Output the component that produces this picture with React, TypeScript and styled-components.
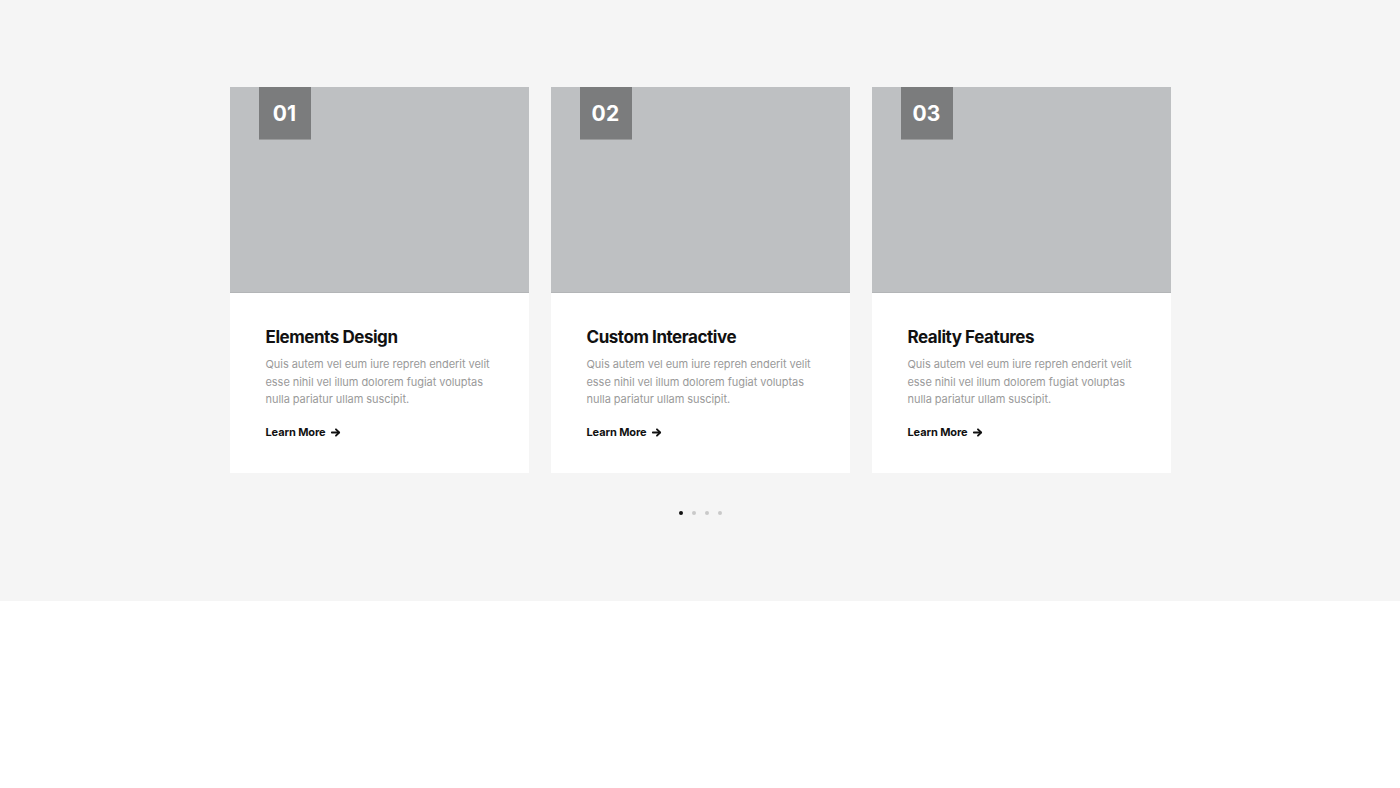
import React from "react";
import styled, { createGlobalStyle } from "styled-components";

const Global = createGlobalStyle`
  html, body { margin: 0; padding: 0; background: #ffffff; }
  body { font-family: Inter, "Noto Sans", sans-serif; }
  * { box-sizing: border-box; }
`;

const Section = styled.section`
  background: #f5f5f5;
  height: 601px;
  padding-top: 87px;
  display: flex;
  flex-direction: column;
  align-items: center;
`;

const Row = styled.div`
  display: grid;
  grid-template-columns: repeat(3, 299px);
  gap: 22px;
`;

const Card = styled.article`
  background: #ffffff;
  height: 386px;
  display: flex;
  flex-direction: column;
`;

const Media = styled.div`
  position: relative;
  height: 206px;
  background: #bec0c2;
  border-bottom: 1px solid #b3b5b7;
`;

const Badge = styled.div`
  position: absolute;
  left: 29px;
  top: 0;
  width: 52px;
  height: 53px;
  background: #7b7c7d;
  border-bottom: 1px solid #9a9b9c;
  color: #ffffff;
  font-weight: 700;
  font-size: 21px;
  display: flex;
  align-items: center;
  justify-content: center;
  letter-spacing: 0.2px;
`;

const Body = styled.div`
  padding: 32px 36px 0 36px;
  display: flex;
  flex-direction: column;
`;

const Title = styled.h3`
  margin: 0;
  font-size: 17px;
  font-weight: 700;
  color: #111111;
  line-height: 24px;
  letter-spacing: -0.45px;
`;

const Text = styled.p`
  margin: 7px 0 0 0;
  font-size: 11px;
  line-height: 17.7px;
  color: #9a9a9a;
  letter-spacing: -0.05px;
`;

const More = styled.a`
  margin-top: 16px;
  display: inline-flex;
  align-items: center;
  gap: 4px;
  font-size: 11px;
  font-weight: 700;
  color: #111111;
  text-decoration: none;
  letter-spacing: -0.1px;
`;

const Dots = styled.div`
  margin-top: 38px;
  display: flex;
  gap: 9px;
`;

const Dot = styled.span<{ $active?: boolean }>`
  width: 4px;
  height: 4px;
  border-radius: 50%;
  background: ${(p) => (p.$active ? "#111111" : "#c9c9c9")};
`;

const items = [
  { n: "01", t: "Elements Design" },
  { n: "02", t: "Custom Interactive" },
  { n: "03", t: "Reality Features" },
];

const Arrow = () => (
  <svg width="11" height="11" viewBox="0 0 24 24" fill="none" stroke="#111" strokeWidth="4" strokeLinecap="round" strokeLinejoin="round">
    <path d="M4 12h15" />
    <path d="M13 5l7 7-7 7" />
  </svg>
);

export default function App() {
  return (
    <>
      <Global />
      <Section>
        <Row>
          {items.map((it) => (
            <Card key={it.n}>
              <Media>
                <Badge>{it.n}</Badge>
              </Media>
              <Body>
                <Title>{it.t}</Title>
                <Text>
                  Quis autem vel eum iure repreh enderit velit esse nihil vel illum dolorem fugiat voluptas nulla pariatur ullam suscipit.
                </Text>
                <More href="#">
                  Learn More <Arrow />
                </More>
              </Body>
            </Card>
          ))}
        </Row>
        <Dots>
          <Dot $active />
          <Dot />
          <Dot />
          <Dot />
        </Dots>
      </Section>
    </>
  );
}
